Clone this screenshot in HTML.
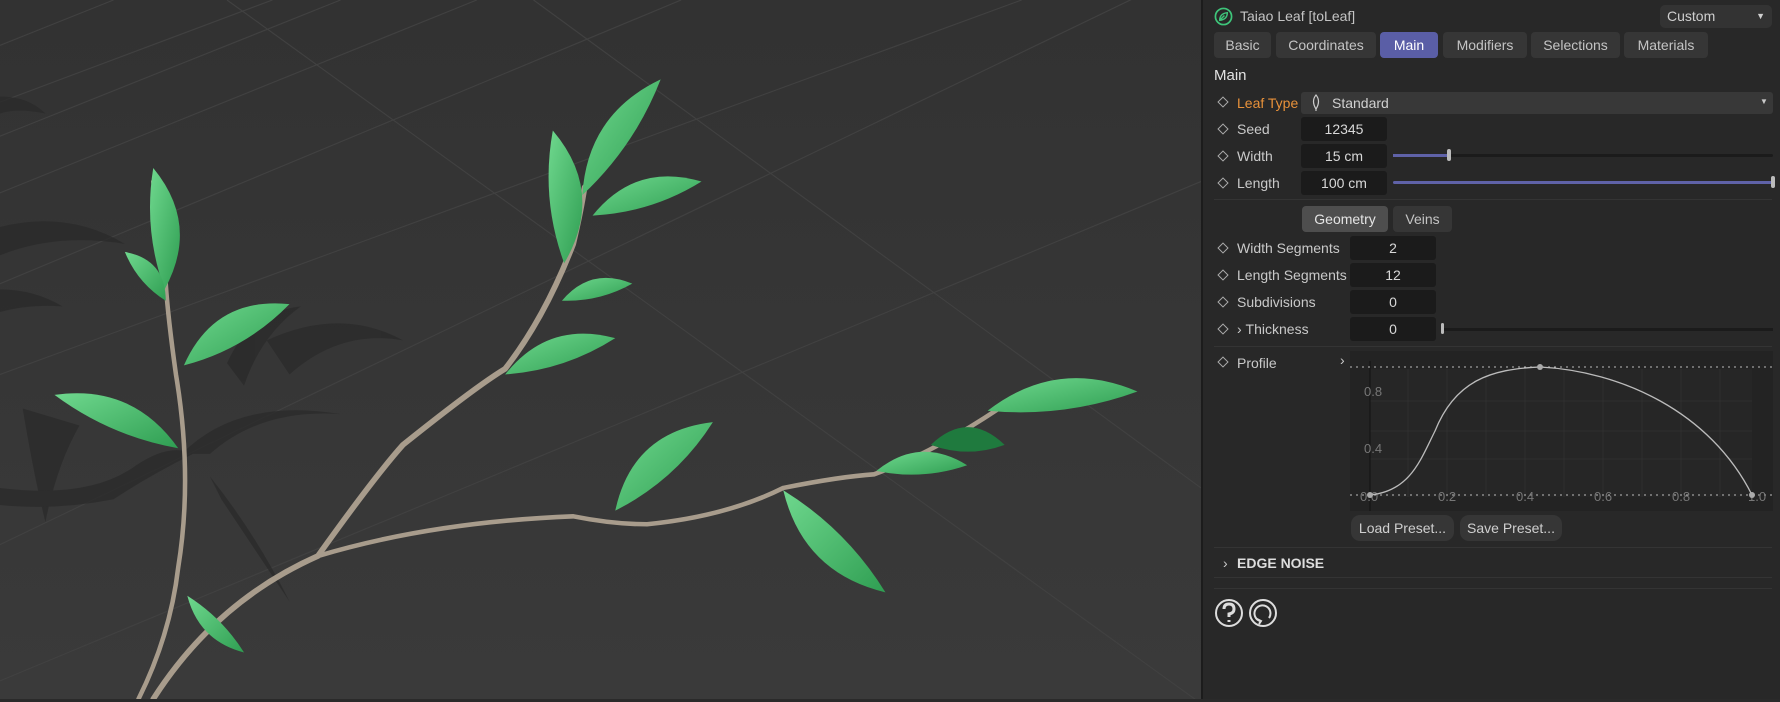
<!DOCTYPE html>
<html><head><meta charset="utf-8"><style>
*{margin:0;padding:0;box-sizing:border-box}
body{width:1780px;height:699px;overflow:hidden;background:#2a2a2a;font-family:"Liberation Sans",sans-serif;font-size:14px;color:#c9c9c9;position:relative}
#vp{position:absolute;left:0;top:0;width:1201px;height:699px;background:#363636}
#panel{position:absolute;left:1201px;top:0;width:579px;height:699px;background:#282828;border-left:2px solid #1c1c1c}
.a{position:absolute;white-space:nowrap}
.tab{position:absolute;top:32px;height:26px;background:#363636;border-radius:4px;text-align:center;line-height:26px;color:#c4c4c4}
.fld{position:absolute;height:24px;background:#1b1b1b;border-radius:3px;text-align:center;line-height:24px;color:#d8d8d8}
.dia{position:absolute;width:8px;height:8px;border:1.5px solid #aaa;transform:rotate(45deg)}
.sep{position:absolute;left:1214px;right:8px;height:1px;background:#343434}
.btn{position:absolute;height:26px;background:#363636;border-radius:9px;text-align:center;line-height:26px;color:#cfcfcf}
</style></head><body>
<div id="vp">
<svg width="1201" height="699" viewBox="0 0 1058 616" preserveAspectRatio="none">
<defs>
<linearGradient id="g" x1="0" y1="0" x2="1" y2="1"><stop offset="0" stop-color="#6fd88e"/><stop offset="1" stop-color="#2f9e52"/></linearGradient>
<linearGradient id="bg" x1="0" y1="0" x2="0" y2="1"><stop offset="0" stop-color="#323232"/><stop offset="1" stop-color="#3a3a3a"/></linearGradient>
</defs>
<rect width="1058" height="616" fill="url(#bg)"/>
<g stroke="#414141" stroke-width="1" fill="none">
<path d="M0 170 L420 0"/><path d="M0 250 L600 0"/><path d="M0 480 L1058 -30"/><path d="M0 600 L1058 160"/>
<path d="M470 0 L1058 430"/><path d="M0 120 L300 0"/><path d="M200 0 L1058 620"/><path d="M0 330 L900 0"/>
<path d="M0 90 L240 0"/><path d="M0 40 L100 0"/>
</g>
<g fill="#2b2b2b" opacity="0.8">
<path d="M0 85 Q25 85 40 100 Q15 95 0 100Z"/>
<path d="M0 200 Q60 185 110 215 Q50 205 0 225Z"/>
<path d="M0 255 Q30 255 55 270 Q25 268 0 275Z"/>
<path d="M200 320 Q220 275 265 270 Q230 295 215 340Z"/>
<path d="M235 300 Q300 270 355 300 Q300 290 255 330Z"/>
<path d="M160 400 Q210 350 300 365 Q230 360 185 400Z"/>
<path d="M20 360 Q30 420 40 460 Q50 410 70 375Z"/>
<path d="M0 430 Q80 440 120 410 Q150 390 170 400 Q130 420 100 440 Q50 450 0 445Z"/>
<path d="M185 420 Q225 470 255 530 Q225 485 195 440Z"/>
</g>
<g fill="none" stroke="#a89c8c" stroke-linecap="round">
<path d="M122 616 Q150 560 157 500 Q170 420 155 330 Q148 280 146 250 Q142 200 135 160" stroke-width="4"/>
<path d="M135 616 Q190 530 280 490 Q330 420 355 392 Q420 340 445 325 Q480 280 505 215 Q512 185 515 165" stroke-width="5"/>
<path d="M280 490 Q380 460 505 455 Q540 462 570 462 Q640 455 690 430 Q740 420 770 418 Q820 400 880 360" stroke-width="4"/>
</g>
<g id="leaves" fill="url(#g)"></g>
</svg>
</div>
<div id="panel"></div>
<svg class="a" style="left:1214px;top:7px" width="19" height="19" viewBox="0 0 20 20"><circle cx="10" cy="10" r="8.5" fill="none" stroke="#3ec57a" stroke-width="1.8"/><path d="M6 14 Q6 7 14 6 Q14 13 6 14Z M6 14 L11 9" fill="none" stroke="#3ec57a" stroke-width="1.5"/></svg>
<div class="a" style="left:1240px;top:8px;color:#c4c4c4">Taiao Leaf [toLeaf]</div>
<div class="a" style="left:1660px;top:5px;width:112px;height:23px;background:#333;border-radius:5px;line-height:23px;padding-left:7px;color:#cfcfcf">Custom<span style="position:absolute;right:7px;top:0;font-size:9px">▼</span></div>
<div class="tab" style="left:1214px;width:57px">Basic</div>
<div class="tab" style="left:1276px;width:100px">Coordinates</div>
<div class="tab" style="left:1380px;width:58px;background:#5a5ea6;color:#fff">Main</div>
<div class="tab" style="left:1443px;width:84px">Modifiers</div>
<div class="tab" style="left:1531px;width:89px">Selections</div>
<div class="tab" style="left:1624px;width:84px">Materials</div>
<div class="a" style="left:1214px;top:67px;font-size:15px;color:#e2e2e2">Main</div>
<div class="dia" style="left:1219px;top:98px"></div><div class="a" style="left:1237px;top:95px;color:#e8913a">Leaf Type</div>
<div class="a" style="left:1301px;top:92px;width:472px;height:22px;background:#383838;border-radius:3px"></div>
<svg class="a" style="left:1310px;top:94px" width="12" height="18" viewBox="0 0 12 18"><path d="M6 1 Q11 7 6 15 Q1 7 6 1Z M6 15 L6 17" fill="none" stroke="#ccc" stroke-width="1.2"/></svg>
<div class="a" style="left:1332px;top:95px;color:#d0d0d0">Standard</div><div class="a" style="left:1760px;top:97px;font-size:8px">▼</div>
<div class="dia" style="left:1219px;top:125px"></div><div class="a" style="left:1237px;top:121px">Seed</div><div class="fld" style="left:1301px;top:117px;width:86px">12345</div>
<div class="dia" style="left:1219px;top:152px"></div><div class="a" style="left:1237px;top:148px">Width</div><div class="fld" style="left:1301px;top:144px;width:86px">15 cm</div>
<div class="a" style="left:1393px;top:154px;width:380px;height:3px;background:#1b1b1b;border-radius:2px"></div><div class="a" style="left:1393px;top:154px;width:56px;height:3px;background:#5f62a8"></div><div class="a" style="left:1447px;top:149px;width:4px;height:12px;background:#bbb;border-radius:2px"></div>
<div class="dia" style="left:1219px;top:179px"></div><div class="a" style="left:1237px;top:175px">Length</div><div class="fld" style="left:1301px;top:171px;width:86px">100 cm</div>
<div class="a" style="left:1393px;top:181px;width:380px;height:3px;background:#5f62a8;border-radius:2px"></div><div class="a" style="left:1771px;top:176px;width:4px;height:12px;background:#bbb;border-radius:2px"></div>
<div class="sep" style="top:199px"></div>
<div class="tab" style="left:1302px;top:206px;width:86px;background:#4e4e4e;color:#e4e4e4">Geometry</div>
<div class="tab" style="left:1393px;top:206px;width:59px">Veins</div>
<div class="dia" style="left:1219px;top:244px"></div><div class="a" style="left:1237px;top:240px">Width Segments</div><div class="fld" style="left:1350px;top:236px;width:86px">2</div>
<div class="dia" style="left:1219px;top:271px"></div><div class="a" style="left:1237px;top:267px">Length Segments</div><div class="fld" style="left:1350px;top:263px;width:86px">12</div>
<div class="dia" style="left:1219px;top:298px"></div><div class="a" style="left:1237px;top:294px">Subdivisions</div><div class="fld" style="left:1350px;top:290px;width:86px">0</div>
<div class="dia" style="left:1219px;top:325px"></div><div class="a" style="left:1237px;top:321px">›&nbsp;Thickness</div><div class="fld" style="left:1350px;top:317px;width:86px">0</div>
<div class="a" style="left:1441px;top:328px;width:332px;height:3px;background:#1b1b1b"></div><div class="a" style="left:1441px;top:323px;width:3px;height:11px;background:#bbb;border-radius:2px"></div>
<div class="sep" style="top:346px"></div>
<div class="dia" style="left:1219px;top:358px"></div><div class="a" style="left:1237px;top:355px">Profile</div><div class="a" style="left:1340px;top:352px">›</div>
<svg class="a" style="left:1350px;top:351px" width="423" height="160" viewBox="0 0 423 160">
<rect width="423" height="160" fill="#232323"/><rect x="20" y="18" width="382" height="128" fill="#262626"/>
<g stroke="#2f2f2f"><path d="M58 18V146M97 18V146M136 18V146M175 18V146M214 18V146M253 18V146M292 18V146M331 18V146M370 18V146M20 50H402M20 80H402M20 108H402"/></g>
<path d="M20 10V160" stroke="#111"/>
<g stroke="#bbb" stroke-dasharray="2 4"><path d="M0 16H423M0 144H423"/></g>
<text x="14" y="45" fill="#777" font-size="13">0.8</text><text x="14" y="102" fill="#777" font-size="13">0.4</text>
<g fill="#777" font-size="13"><text x="10" y="150">0.0</text><text x="88" y="150">0.2</text><text x="166" y="150">0.4</text><text x="244" y="150">0.6</text><text x="322" y="150">0.8</text><text x="398" y="150">1.0</text></g>
<path d="M20 144 C60 140 70 110 85 80 C105 30 140 18 190 16 C270 20 360 60 402 144" fill="none" stroke="#bbb" stroke-width="1.3"/>
<g fill="#aaa"><circle cx="20" cy="144" r="3"/><circle cx="190" cy="16" r="3"/><circle cx="402" cy="144" r="3"/></g>
</svg>
<div class="btn" style="left:1351px;top:515px;width:103px">Load Preset...</div>
<div class="btn" style="left:1460px;top:515px;width:102px">Save Preset...</div>
<div class="sep" style="top:547px"></div>
<div class="a" style="left:1223px;top:555px">›</div><div class="a" style="left:1237px;top:555px;font-weight:bold;color:#ddd">EDGE NOISE</div>
<div class="sep" style="top:577px"></div><div class="sep" style="top:588px"></div>
<svg class="a" style="left:1214px;top:598px" width="64" height="30" viewBox="0 0 64 30"><circle cx="15" cy="15" r="13" fill="none" stroke="#ddd" stroke-width="2"/><path d="M10 11 Q10 6 15 6 Q20 6 20 11 Q20 15 15 16 V19 M15 22 V24" fill="none" stroke="#ddd" stroke-width="3"/><circle cx="49" cy="15" r="13" fill="none" stroke="#ddd" stroke-width="2"/><path d="M46 23 A8 8 0 1 1 55 20" fill="none" stroke="#ddd" stroke-width="2"/><path d="M43 21 L47 23 L45 26" fill="none" stroke="#ddd" stroke-width="2"/></svg>
<script>
var L=[[145,255,135,148,14],[146,265,110,222,9],[162,322,255,268,-15],[157,395,48,348,14],[497,232,487,115,16],[513,172,582,70,-14],[522,190,618,160,-13],[495,265,557,250,-9],[445,330,542,298,-13],[542,450,628,372,-16],[690,432,780,522,15],[772,415,852,410,-11],[820,392,885,392,-12,1],[870,362,1002,345,-15],[165,525,215,575,8]];
var g=document.getElementById('leaves'),s='';
L.forEach(function(l){var x1=l[0],y1=l[1],x2=l[2],y2=l[3],w=l[4],dx=x2-x1,dy=y2-y1,n=Math.hypot(dx,dy),px=-dy/n,py=dx/n,mx=(x1+x2)/2,my=(y1+y2)/2;
var c1x=mx+px*w*2.6,c1y=my+py*w*2.6,c2x=mx-px*w*1.0,c2y=my-py*w*1.0;
s+='<path d="M'+x1+' '+y1+' Q'+c1x+' '+c1y+' '+x2+' '+y2+' Q'+c2x+' '+c2y+' '+x1+' '+y1+'Z"'+(l[5]?' fill="#1f7a3e"':'')+'/>';});
g.innerHTML=s;
</script>
</body></html>
